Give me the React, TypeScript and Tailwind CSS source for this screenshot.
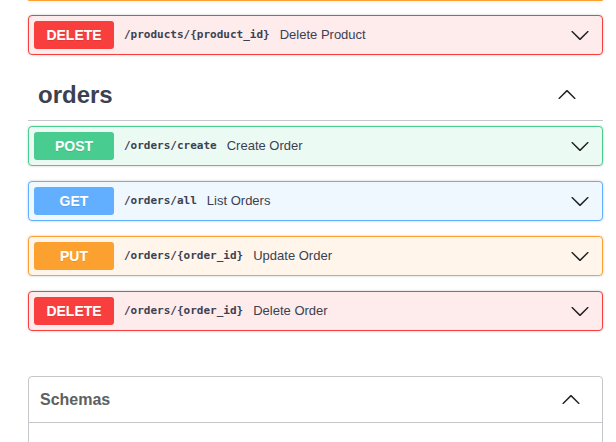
import clsx from "clsx";

type Method = "GET" | "POST" | "PUT" | "DELETE";

const METHOD_STYLE: Record<Method, { block: string; badge: string }> = {
  GET: { block: "bg-[#eff7ff] border-[#61affe]", badge: "bg-[#61affe]" },
  POST: { block: "bg-[#ecfaf4] border-[#49cc90]", badge: "bg-[#49cc90]" },
  PUT: { block: "bg-[#fff5ea] border-[#fca130]", badge: "bg-[#fca130]" },
  DELETE: { block: "bg-[#feebeb] border-[#f93e3e]", badge: "bg-[#f93e3e]" },
};

const ORDER_ROUTES: { method: Method; path: string; summary: string }[] = [
  { method: "POST", path: "/orders/create", summary: "Create Order" },
  { method: "GET", path: "/orders/all", summary: "List Orders" },
  { method: "PUT", path: "/orders/{order_id}", summary: "Update Order" },
  { method: "DELETE", path: "/orders/{order_id}", summary: "Delete Order" },
];

function Arrow({ up = false }: { up?: boolean }) {
  return (
    <svg width="20" height="20" viewBox="0 0 20 20" className={clsx("shrink-0 fill-[#222]", up && "rotate-180")} aria-hidden="true">
      <path d="M17.418 6.109c.272-.268.709-.268.979 0s.271.701 0 .969l-7.908 7.83c-.27.268-.707.268-.979 0l-7.908-7.83c-.27-.268-.27-.701 0-.969.271-.268.709-.268.979 0L10 13.25l7.418-7.141z" />
    </svg>
  );
}

function OpBlock({ method, path, summary }: { method: Method; path: string; summary: string }) {
  const style = METHOD_STYLE[method];
  return (
    <div
      className={clsx(
        "mb-[15px] flex h-[40px] items-center rounded-[4px] border pl-[5px] pr-[12px] shadow-[0_0_3px_rgba(0,0,0,0.19)]",
        style.block,
      )}
    >
      <span
        className={clsx(
          "flex h-[28px] w-[80px] items-center justify-center rounded-[3px] font-['Liberation_Sans',Arial,sans-serif] text-[14px] font-bold text-white [text-shadow:0_1px_0_rgba(0,0,0,0.1)]",
          style.badge,
        )}
      >
        {method}
      </span>
      <span className="px-[10px] font-['DejaVu_Sans_Mono',monospace] text-[11px] font-semibold text-[#3b4151]">{path}</span>
      <span className="flex-1 font-['Liberation_Sans',Arial,sans-serif] text-[13px] text-[#3b4151]">{summary}</span>
      <Arrow />
    </div>
  );
}

export default function App() {
  return (
    <div className="h-[442px] w-[616px] overflow-hidden bg-white font-['Liberation_Sans',Arial,sans-serif]">
      <div className="pl-[28px] pr-[13px]">
        {/* tail of the previous (PUT) block scrolled out of view */}
        <div className="mb-[14px] h-[1px] rounded-b-[4px] border-b border-[#fca130] bg-[#fff5ea] shadow-[0_1px_3px_rgba(0,0,0,0.12)]" />
        <OpBlock method="DELETE" path="/products/{product_id}" summary="Delete Product" />

        <div className="mb-[5px] flex h-[51px] items-center border-b border-[rgba(59,65,81,0.3)] pl-[10px] pr-[26px]">
          <h3 className="flex-1 text-[24px] font-bold text-[#3b4151]">orders</h3>
          <Arrow up />
        </div>

        {ORDER_ROUTES.map((route) => (
          <OpBlock key={route.method + route.path} {...route} />
        ))}

        <div className="mt-[45px] rounded-[4px] border border-[rgba(59,65,81,0.3)]">
          <div className="flex h-[46px] items-center border-b border-[rgba(59,65,81,0.3)] pl-[11px] pr-[21px]">
            <h4 className="flex-1 text-[16px] font-bold text-[#606060]">Schemas</h4>
            <Arrow up />
          </div>
          <div className="h-[60px]" />
        </div>
      </div>
    </div>
  );
}
